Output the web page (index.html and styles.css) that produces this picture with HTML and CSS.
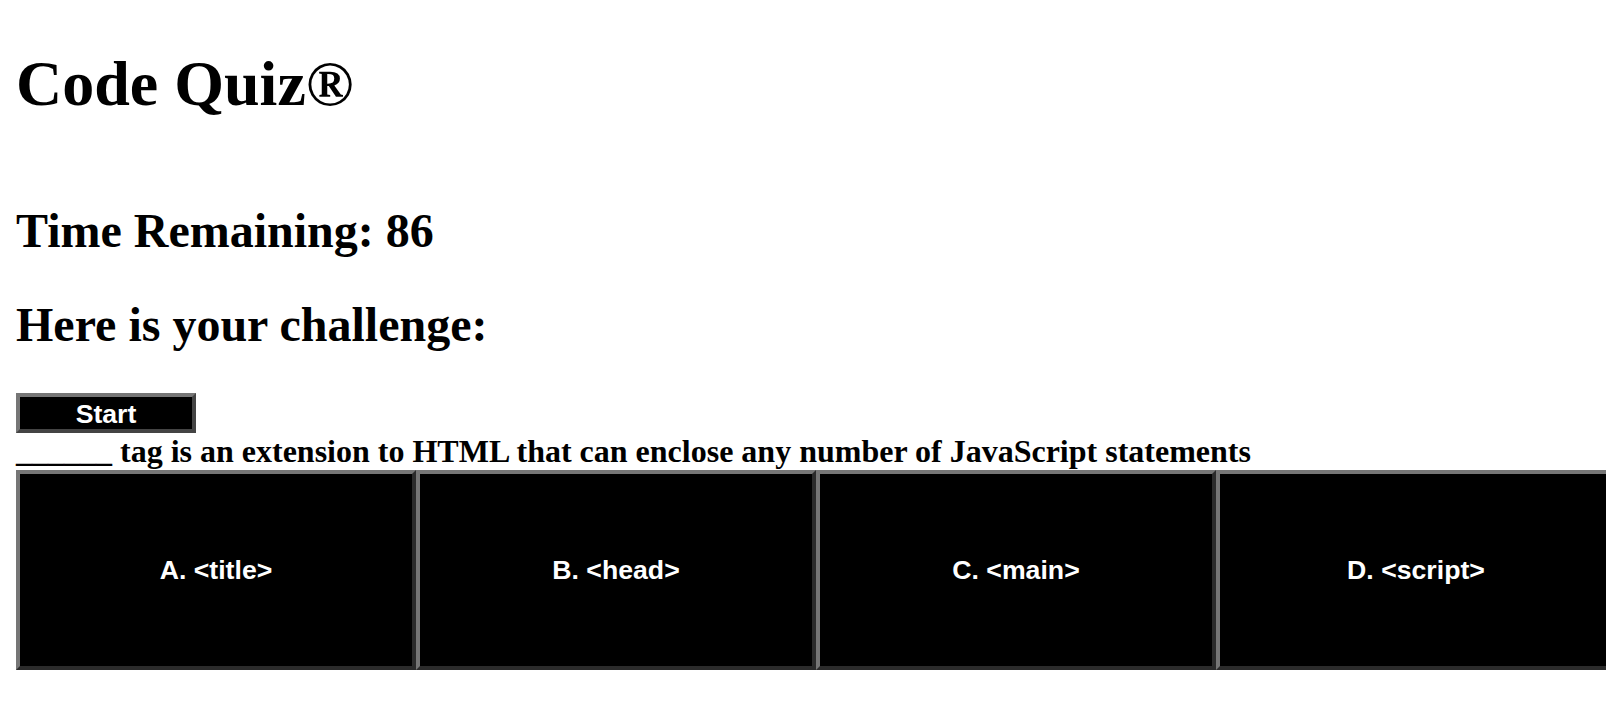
FILE: index.html
```html
<!DOCTYPE html>
<html lang="en">
<head>
<meta charset="utf-8">
<title>Code Quiz</title>
<link rel="stylesheet" href="styles.css">
</head>
<body>
  <header class="site-header">
    <h1 class="title">Code Quiz®</h1>
  </header>
  <main class="quiz">
    <h2 class="timer">Time Remaining: <span class="time">86</span></h2>
    <h2 class="prompt">Here is your challenge:</h2>
    <button class="start-btn" type="button">Start</button>
    <div class="question">______ tag is an extension to HTML that can enclose any number of JavaScript statements</div>
    <div class="answers">
      <button class="answer" type="button">A. &lt;title&gt;</button>
      <button class="answer" type="button">B. &lt;head&gt;</button>
      <button class="answer" type="button">C. &lt;main&gt;</button>
      <button class="answer" type="button">D. &lt;script&gt;</button>
    </div>
  </main>
</body>
</html>
```

FILE: styles.css
```css
html {
  overflow: hidden;
}

body {
  margin: 0;
  padding: 0 16px;
  font-family: "Liberation Serif", "Times New Roman", serif;
  color: #000;
  background: #fff;
}

.site-header {
  padding-top: 47px;
}

.title {
  margin: 0;
  font-size: 64px;
  font-weight: bold;
  line-height: 73.5px;
}

.quiz {
  padding-top: 82px;
}

.timer,
.prompt {
  margin: 0;
  font-size: 48px;
  font-weight: bold;
  line-height: 55px;
}

.prompt {
  margin-top: 39px;
}

.start-btn {
  display: block;
  margin-top: 41px;
  width: 180px;
  height: 40px;
  padding: 2px 0 0;
  background: #000;
  color: #fff;
  font-family: "Liberation Sans", Arial, sans-serif;
  font-size: 26.67px;
  font-weight: bold;
  border: 4px solid;
  border-color: #767676 #444 #444 #767676;
}

.question {
  font-size: 32px;
  font-weight: bold;
  line-height: 37px;
}

.answers {
  display: flex;
  flex-wrap: nowrap;
}

.answer {
  flex: none;
  width: 400px;
  height: 200px;
  padding: 2px 0 0;
  background: #000;
  color: #fff;
  font-family: "Liberation Sans", Arial, sans-serif;
  font-size: 26.67px;
  font-weight: bold;
  border: 4px solid;
  border-color: #767676 #2b2b2b #2b2b2b #767676;
}
```
